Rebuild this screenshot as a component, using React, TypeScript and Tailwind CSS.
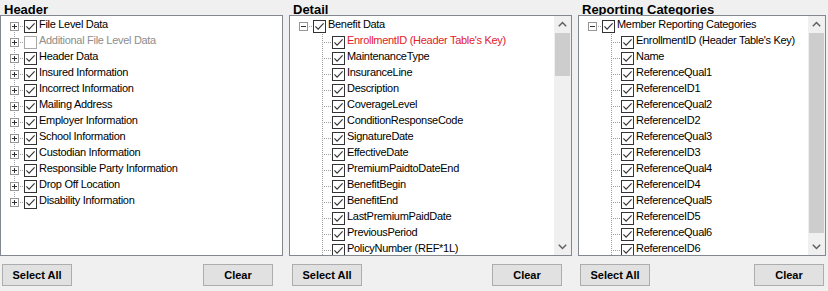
import React from 'react';

type Item = {
  label: string;
  level: 0 | 1;
  btn?: 'plus' | 'minus';
  vTop?: boolean;
  vBottom?: boolean;
  checked?: boolean;
  disabled?: boolean;
  red?: boolean;
};

const LINE = '#a0a0a0';

function Connector({ btn, vTop, vBottom }: { btn?: 'plus' | 'minus'; vTop?: boolean; vBottom?: boolean }) {
  return (
    <svg width="19" height="16" viewBox="0 0 19 16" shapeRendering="crispEdges" className="block shrink-0">
      {vTop && <line x1="9.5" y1="0" x2="9.5" y2="8" stroke={LINE} strokeDasharray="1 1" />}
      {vBottom && <line x1="9.5" y1="8" x2="9.5" y2="16" stroke={LINE} strokeDasharray="1 1" />}
      <line x1="11" y1="8.5" x2="19" y2="8.5" stroke={LINE} strokeDasharray="1 1" />
      {btn && (
        <>
          <rect x="5.5" y="4.5" width="8" height="8" fill="#fff" stroke="#969696" />
          <line x1="7" y1="8.5" x2="12" y2="8.5" stroke="#333" />
          {btn === 'plus' && <line x1="9.5" y1="6" x2="9.5" y2="11" stroke="#333" />}
        </>
      )}
    </svg>
  );
}

function Check({ checked, disabled }: { checked?: boolean; disabled?: boolean }) {
  return (
    <svg width="13" height="13" viewBox="0 0 13 13" className="block shrink-0 mt-[2px]">
      <rect x="0.5" y="0.5" width="12" height="12" fill="#fff" stroke={disabled ? '#a8a8a8' : '#333333'} shapeRendering="crispEdges" />
      {checked && (
        <polyline points="2.4,6.4 5.1,9.1 10.6,3.4" fill="none" stroke="#333333" strokeWidth="1.15" />
      )}
    </svg>
  );
}

function Row({ item }: { item: Item }) {
  const color = item.red ? 'text-[#e3202a]' : item.disabled ? 'text-[#8d8d8d]' : 'text-black';
  return (
    <div className={`flex items-start h-[16px] ${item.level === 1 ? 'pl-[23px]' : 'pl-[4px]'}`}>
      <Connector btn={item.btn} vTop={item.vTop} vBottom={item.vBottom} />
      <Check checked={item.checked} disabled={item.disabled} />
      <span className={`ml-[2px] leading-[13px] whitespace-nowrap ${color}`}>{item.label}</span>
    </div>
  );
}

function Chevron({ up }: { up?: boolean }) {
  return (
    <svg width="17" height="17" viewBox="0 0 17 17" className="block">
      <polyline
        points={up ? '4.8,10.2 8.5,6.5 12.2,10.2' : '4.8,6.8 8.5,10.5 12.2,6.8'}
        fill="none"
        stroke="#606060"
        strokeWidth="1.5"
      />
    </svg>
  );
}

function Scrollbar({ thumbClass }: { thumbClass: string }) {
  return (
    <div className="w-[17px] shrink-0 bg-[#f0f0f0] flex flex-col">
      <div className="h-[17px]"><Chevron up /></div>
      <div className="flex-1 px-[1px]">
        <div className={`${thumbClass} bg-[#cdcdcd]`} />
      </div>
      <div className="h-[17px]"><Chevron /></div>
    </div>
  );
}

function Btn({ children }: { children: React.ReactNode }) {
  return (
    <div className="w-[70px] h-[22px] bg-[#e1e1e1] border border-[#adadad] flex items-center justify-center font-bold text-[11px] text-black font-['Liberation_Sans',Arial,sans-serif]">
      {children}
    </div>
  );
}

function Column({
  title,
  items,
  widthClass,
  btnPad,
  thumbClass,
}: {
  title: string;
  items: Item[];
  widthClass: string;
  btnPad: string;
  thumbClass?: string;
}) {
  return (
    <div className={`flex flex-col shrink-0 ${widthClass}`}>
      <div className="h-[15px] overflow-hidden pl-[4px] font-bold text-[13px] leading-[20px] text-black whitespace-nowrap">
        {title}
      </div>
      <div className="h-[241px] border border-[#828790] bg-white flex overflow-hidden">
        <div className="flex-1 min-w-0 pt-[2px] overflow-hidden text-[11px] tracking-[-0.3px]">
          {items.map((it, i) => (
            <Row key={i} item={it} />
          ))}
        </div>
        {thumbClass && <Scrollbar thumbClass={thumbClass} />}
      </div>
      <div className={`mt-[8px] flex justify-between ${btnPad}`}>
        <Btn>Select All</Btn>
        <Btn>Clear</Btn>
      </div>
    </div>
  );
}

const leftLabels = [
  'File Level Data',
  'Additional File Level Data',
  'Header Data',
  'Insured Information',
  'Incorrect Information',
  'Mailing Address',
  'Employer Information',
  'School Information',
  'Custodian Information',
  'Responsible Party Information',
  'Drop Off Location',
  'Disability Information',
];

const leftItems: Item[] = leftLabels.map((label, i) => ({
  label,
  level: 0,
  btn: 'plus',
  vTop: i > 0,
  vBottom: i < leftLabels.length - 1,
  checked: i !== 1,
  disabled: i === 1,
}));

function tree(root: string, children: string[], redFirst: boolean): Item[] {
  return [
    { label: root, level: 0, btn: 'minus', checked: true },
    ...children.map((label, i) => ({
      label,
      level: 1 as const,
      vTop: true,
      vBottom: true,
      checked: true,
      red: redFirst && i === 0,
    })),
  ];
}

const middleItems = tree(
  'Benefit Data',
  [
    "EnrollmentID (Header Table's Key)",
    'MaintenanceType',
    'InsuranceLine',
    'Description',
    'CoverageLevel',
    'ConditionResponseCode',
    'SignatureDate',
    'EffectiveDate',
    'PremiumPaidtoDateEnd',
    'BenefitBegin',
    'BenefitEnd',
    'LastPremiumPaidDate',
    'PreviousPeriod',
    'PolicyNumber (REF*1L)',
  ],
  true
);

const rightItems = tree(
  'Member Reporting Categories',
  [
    "EnrollmentID (Header Table's Key)",
    'Name',
    'ReferenceQual1',
    'ReferenceID1',
    'ReferenceQual2',
    'ReferenceID2',
    'ReferenceQual3',
    'ReferenceID3',
    'ReferenceQual4',
    'ReferenceID4',
    'ReferenceQual5',
    'ReferenceID5',
    'ReferenceQual6',
    'ReferenceID6',
  ],
  false
);

export default function App() {
  return (
    <div className="w-[828px] h-[291px] bg-[#f0f0f0] flex gap-[6px] overflow-hidden font-['Liberation_Sans',Arial,sans-serif]">
      <Column title="Header" items={leftItems} widthClass="w-[283px]" btnPad="pl-[2px] pr-[10px]" />
      <Column
        title="Detail"
        items={middleItems}
        widthClass="w-[283px]"
        btnPad="pl-[3px] pr-[10px]"
        thumbClass="h-[43px]"
      />
      <Column
        title="Reporting Categories"
        items={rightItems}
        widthClass="w-[248px]"
        btnPad="pl-[2px] pr-[2px]"
        thumbClass="h-[200px]"
      />
    </div>
  );
}
